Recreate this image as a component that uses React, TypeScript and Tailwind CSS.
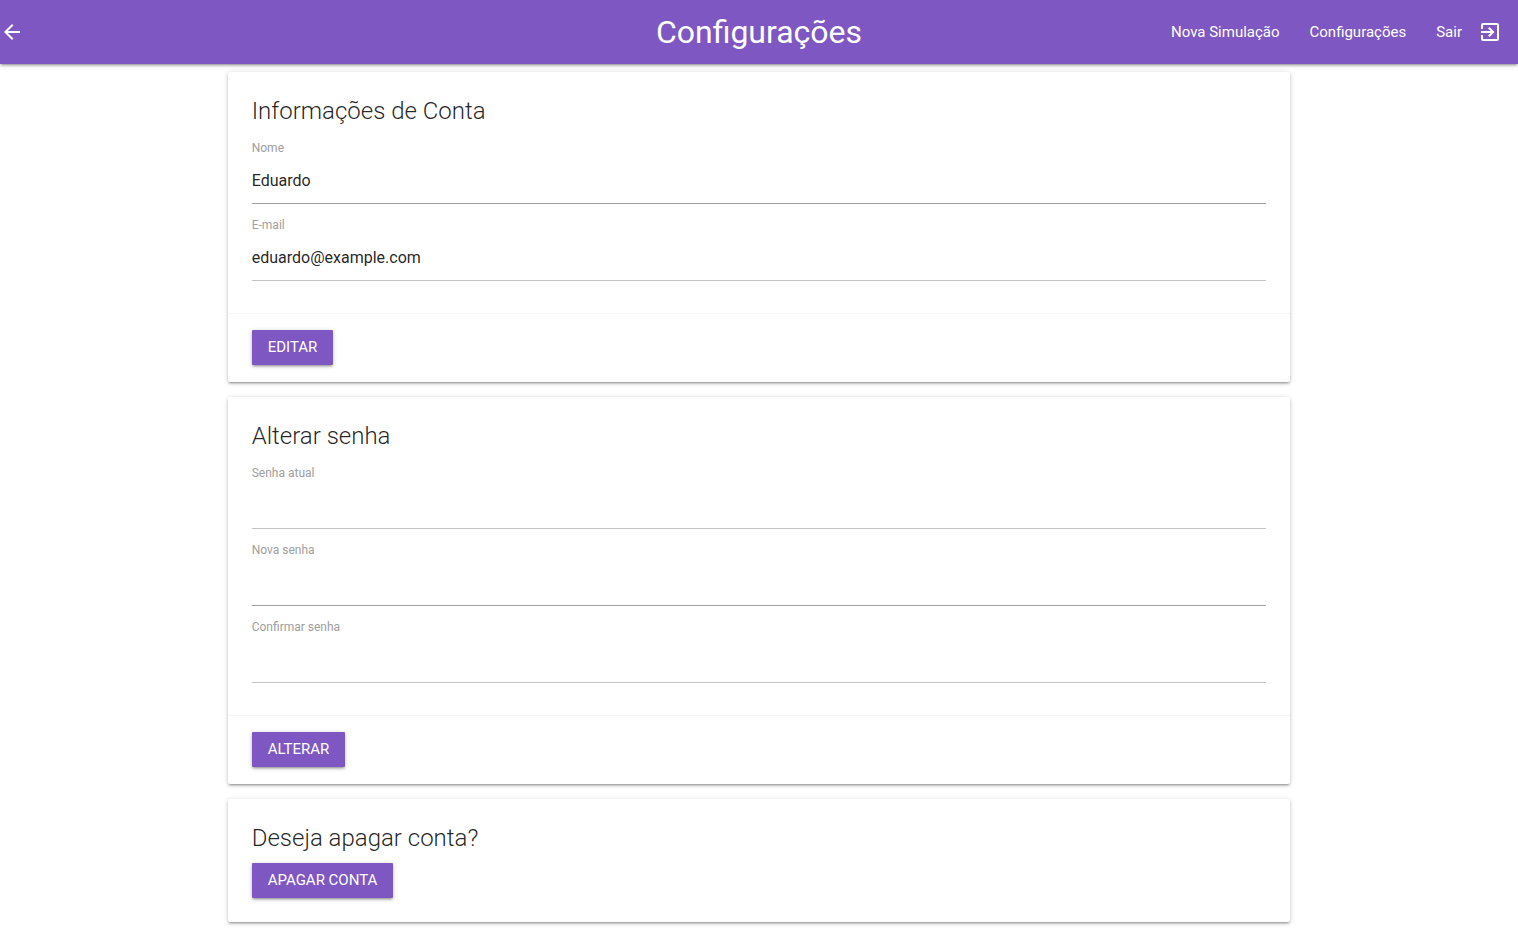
import type { ReactNode } from "react";
import { MdArrowBack, MdExitToApp } from "react-icons/md";

function Field({
  id,
  label,
  type = "text",
  value,
  strong = false,
}: {
  id: string;
  label: string;
  type?: string;
  value?: string;
  strong?: boolean;
}) {
  return (
    <div className="pt-3">
      <label htmlFor={id} className="block text-xs leading-[18px] text-[#9e9e9e]">
        {label}
      </label>
      <input
        id={id}
        type={type}
        defaultValue={value}
        className={`block h-[47px] w-full border-b bg-transparent text-base text-black/87 outline-none focus:border-[#7e57c2] ${
          strong ? "border-[#9e9e9e]" : "border-[#c4c4c4]"
        }`}
      />
    </div>
  );
}

function Button({ children }: { children: ReactNode }) {
  return (
    <button
      type="button"
      className="block h-[35px] rounded-[1px] bg-[#7e57c2] px-4 pb-px text-[15px] text-white uppercase shadow-[0_2px_2px_0_rgba(0,0,0,0.14),0_3px_1px_-2px_rgba(0,0,0,0.12),0_1px_5px_0_rgba(0,0,0,0.2)] hover:bg-[#8b68c8]"
    >
      {children}
    </button>
  );
}

function Card({ title, children, action }: { title: string; children: ReactNode; action?: ReactNode }) {
  return (
    <section className="rounded-[2px] bg-white shadow-[0_2px_2px_0_rgba(0,0,0,0.14),0_3px_1px_-2px_rgba(0,0,0,0.12),0_1px_5px_0_rgba(0,0,0,0.2)]">
      <div className={action ? "px-6 pt-6 pb-8" : "p-6"}>
        <h2 className="text-2xl leading-[31px] font-light text-black/87">{title}</h2>
        {children}
      </div>
      {action && <div className="border-t border-[#f5f5f5] px-6 pt-4 pb-[17px]">{action}</div>}
    </section>
  );
}

export default function App() {
  return (
    <div className="min-h-screen bg-white font-[Roboto,sans-serif]">
      <header className="relative grid h-16 grid-cols-[1fr_auto_1fr] items-center bg-[#7e57c2] text-white shadow-[0_2px_2px_0_rgba(0,0,0,0.14),0_3px_1px_-2px_rgba(0,0,0,0.12),0_1px_5px_0_rgba(0,0,0,0.2)]">
        <a href="#voltar" aria-label="Voltar" className="justify-self-start">
          <MdArrowBack className="size-6" />
        </a>
        <h1 className="text-[32px] leading-16">Configurações</h1>
        <nav className="flex items-center justify-self-end pr-4 text-[15px]">
          <a href="#simulacao" className="px-[15px] leading-16">Nova Simulação</a>
          <a href="#configuracoes" className="px-[15px] leading-16">Configurações</a>
          <a href="#sair" className="flex items-center gap-4 pl-[15px] leading-16">
            Sair
            <MdExitToApp className="size-6" />
          </a>
        </nav>
      </header>

      <main className="mx-auto flex w-[70%] flex-col gap-[15px] pt-2 pb-[15px]">
        <Card title="Informações de Conta" action={<Button>Editar</Button>}>
          <Field id="nome" label="Nome" value="Eduardo" strong />
          <Field id="email" label="E-mail" type="email" value="eduardo@example.com" />
        </Card>

        <Card title="Alterar senha" action={<Button>Alterar</Button>}>
          <Field id="senha-atual" label="Senha atual" type="password" />
          <Field id="nova-senha" label="Nova senha" type="password" strong />
          <Field id="confirmar-senha" label="Confirmar senha" type="password" />
        </Card>

        <Card title="Deseja apagar conta?">
          <div className="pt-[9px]">
            <Button>Apagar conta</Button>
          </div>
        </Card>
      </main>
    </div>
  );
}
